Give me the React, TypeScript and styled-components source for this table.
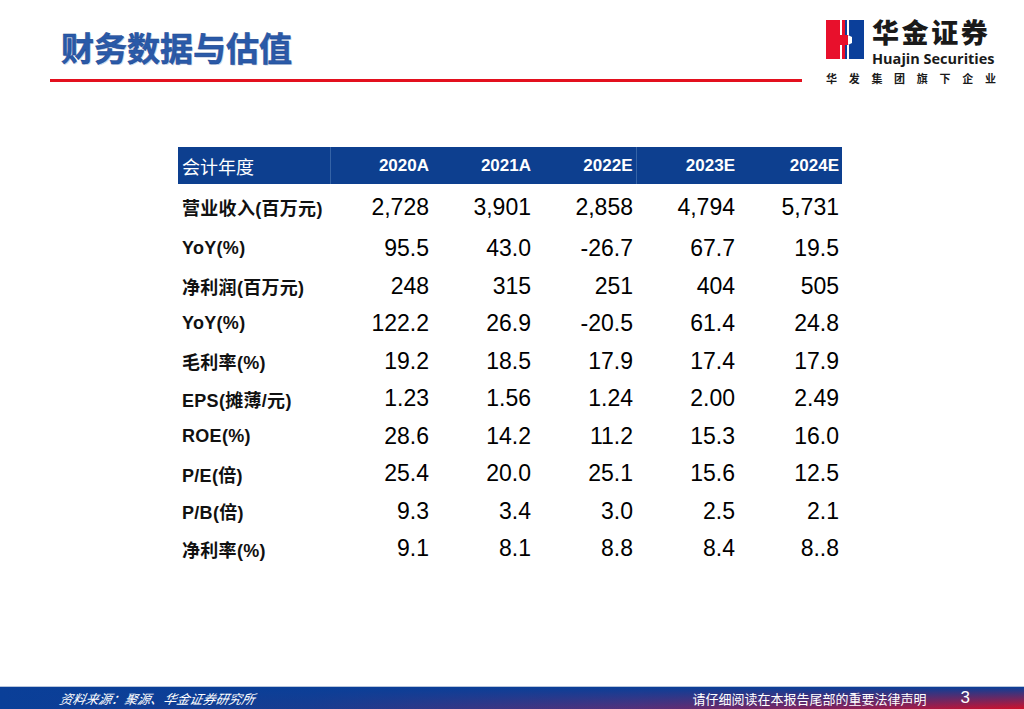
import styled, { createGlobalStyle } from "styled-components";

const GlobalStyle = createGlobalStyle`
  html, body {
    margin: 0;
    padding: 0;
    background: #ffffff;
  }
`;

const SANS = `"Liberation Sans", Arial, "Noto Sans CJK SC", sans-serif`;
const CJK = `"Noto Sans CJK SC", "Liberation Sans", sans-serif`;

const BLUE = "#0d3f8f";
const RED = "#e3101e";

type Row = { label: string; values: string[]; tall?: boolean };

const years = ["2020A", "2021A", "2022E", "2023E", "2024E"];

const rows: Row[] = [
  { label: "营业收入(百万元)", values: ["2,728", "3,901", "2,858", "4,794", "5,731"], tall: true },
  { label: "YoY(%)", values: ["95.5", "43.0", "-26.7", "67.7", "19.5"] },
  { label: "净利润(百万元)", values: ["248", "315", "251", "404", "505"] },
  { label: "YoY(%)", values: ["122.2", "26.9", "-20.5", "61.4", "24.8"] },
  { label: "毛利率(%)", values: ["19.2", "18.5", "17.9", "17.4", "17.9"] },
  { label: "EPS(摊薄/元)", values: ["1.23", "1.56", "1.24", "2.00", "2.49"] },
  { label: "ROE(%)", values: ["28.6", "14.2", "11.2", "15.3", "16.0"] },
  { label: "P/E(倍)", values: ["25.4", "20.0", "25.1", "15.6", "12.5"] },
  { label: "P/B(倍)", values: ["9.3", "3.4", "3.0", "2.5", "2.1"] },
  { label: "净利率(%)", values: ["9.1", "8.1", "8.8", "8.4", "8..8"] },
];

const Logo = () => (
  <LogoWrap>
    <svg width="38" height="39" viewBox="0 0 38 39">
      <rect x="0" y="0" width="19" height="39" fill="#e8102c" />
      <rect x="19" y="0" width="19" height="39" fill="#0b3f9a" />
      <rect x="14" y="0" width="2" height="15" fill="#fff" />
      <rect x="14" y="25" width="2" height="14" fill="#fff" />
      <rect x="21" y="0" width="2" height="15" fill="#fff" />
      <rect x="21" y="25" width="2" height="14" fill="#fff" />
      <rect x="16" y="15" width="6" height="10" fill="#e8102c" />
      <polygon points="22,15 26,17 26,23 22,25" fill="#fff" />
    </svg>
    <LogoText>
      <LogoName>华金证券</LogoName>
      <LogoEn>Huajin Securities</LogoEn>
    </LogoText>
  </LogoWrap>
);

export default function App() {
  return (
    <Page>
      <GlobalStyle />
      <Header>
        <TitleBlock>
          <Title>财务数据与估值</Title>
          <RedLine />
        </TitleBlock>
        <Brand>
          <Logo />
          <Slogan>华发集团旗下企业</Slogan>
        </Brand>
      </Header>

      <Main>
        <Table>
          <colgroup>
            <col style={{ width: 152 }} />
            <col style={{ width: 102 }} />
            <col style={{ width: 102 }} />
            <col style={{ width: 102 }} />
            <col style={{ width: 102 }} />
            <col style={{ width: 104 }} />
          </colgroup>
          <thead>
            <tr>
              <HeadLabel>会计年度</HeadLabel>
              {years.map((y, i) => (
                <HeadCell key={y} $divider={i === 0 || i === 3}>
                  {y}
                </HeadCell>
              ))}
            </tr>
          </thead>
          <tbody>
            {rows.map((r, i) => (
              <BodyRow key={i} $tall={r.tall}>
                <LabelCell>{r.label}</LabelCell>
                {r.values.map((v, j) => (
                  <ValueCell key={j}>{v}</ValueCell>
                ))}
              </BodyRow>
            ))}
          </tbody>
        </Table>
      </Main>

      <Footer>
        <Source>资料来源：聚源、华金证券研究所</Source>
        <FooterRight>
          <Notice>请仔细阅读在本报告尾部的重要法律声明</Notice>
          <PageNum>3</PageNum>
        </FooterRight>
      </Footer>
    </Page>
  );
}

const Page = styled.div`
  width: 1024px;
  height: 709px;
  display: flex;
  flex-direction: column;
  background: #fff;
  overflow: hidden;
`;

const Header = styled.header`
  display: flex;
  align-items: flex-start;
  height: 147px;
`;

const TitleBlock = styled.div`
  margin-left: 50px;
  width: 752px;
  padding-top: 27px;
`;

const Title = styled.h1`
  margin: 0 0 0 11px;
  font-family: ${CJK};
  font-size: 33px;
  line-height: 40px;
  font-weight: 700;
  color: #2a5aa8;
  -webkit-text-stroke: 0.5px #1c4590;
  text-shadow: 1px 1px 0 #c9d5ea;
`;

const RedLine = styled.div`
  margin-top: 12px;
  height: 3px;
  background: ${RED};
`;

const Brand = styled.div`
  margin-left: 24px;
  padding-top: 17px;
  display: flex;
  flex-direction: column;
`;

const LogoWrap = styled.div`
  display: flex;
  align-items: flex-start;
  gap: 8px;
  padding-top: 3px;
`;

const LogoText = styled.div`
  display: flex;
  flex-direction: column;
  gap: 6px;
  margin-top: -3px;
`;

const LogoName = styled.div`
  font-family: ${CJK};
  font-weight: 900;
  font-size: 27px;
  line-height: 29px;
  letter-spacing: 2.6px;
  color: #1a1a1a;
`;

const LogoEn = styled.div`
  font-family: "Open Sans", "Liberation Sans", sans-serif;
  font-weight: 700;
  font-size: 14.5px;
  line-height: 14px;
  color: #1a1a1a;
  white-space: nowrap;
`;

const Slogan = styled.div`
  margin-top: 6px;
  font-family: ${CJK};
  font-weight: 700;
  font-size: 11px;
  line-height: 13px;
  letter-spacing: 11.7px;
  color: #1a1a1a;
`;

const Main = styled.main`
  flex: 1;
  padding-left: 178px;
`;

const Table = styled.table`
  border-collapse: collapse;
  table-layout: fixed;
  width: 664px;
`;

const HeadLabel = styled.th`
  height: 37px;
  padding: 0 0 0 4px;
  background: ${BLUE};
  color: #fff;
  text-align: left;
  font-family: ${CJK};
  font-weight: 400;
  font-size: 18px;
`;

const HeadCell = styled.th<{ $divider?: boolean }>`
  height: 37px;
  padding: 0 3px 0 0;
  background: ${BLUE};
  color: #fff;
  text-align: right;
  font-family: ${SANS};
  font-weight: 700;
  font-size: 17px;
  border-left: ${(p) => (p.$divider ? "1px solid #3563a6" : "none")};
`;

const BodyRow = styled.tr<{ $tall?: boolean }>`
  height: ${(p) => (p.$tall ? "46px" : "37.5px")};
`;

const LabelCell = styled.td`
  padding: 0 0 0 4px;
  font-family: ${SANS};
  font-weight: 700;
  font-size: 18px;
  letter-spacing: 0.3px;
  color: #111;
  white-space: nowrap;
`;

const ValueCell = styled.td`
  padding: 0 3px 0 0;
  text-align: right;
  font-family: ${SANS};
  font-size: 23px;
  color: #000;
`;

const Footer = styled.footer`
  height: 22px;
  border-top: 1px solid #b9c6dc;
  display: flex;
  align-items: center;
  justify-content: space-between;
  padding: 0 54px 0 60px;
  background:
    linear-gradient(to bottom, #0a3f98 0%, rgba(10, 63, 152, 0.55) 45%, rgba(10, 63, 152, 0) 100%),
    linear-gradient(to right, #0a3f98 0%, #183c90 30%, #55307a 62%, #8a2058 82%, #d0102a 100%);
  color: #fff;
`;

const Source = styled.span`
  font-family: ${CJK};
  font-style: italic;
  font-size: 13px;
  transform: skewX(-12deg);
`;

const FooterRight = styled.div`
  display: flex;
  align-items: center;
  gap: 34px;
`;

const Notice = styled.span`
  font-family: ${CJK};
  font-size: 13px;
`;

const PageNum = styled.span`
  font-family: ${SANS};
  font-size: 17px;
`;
